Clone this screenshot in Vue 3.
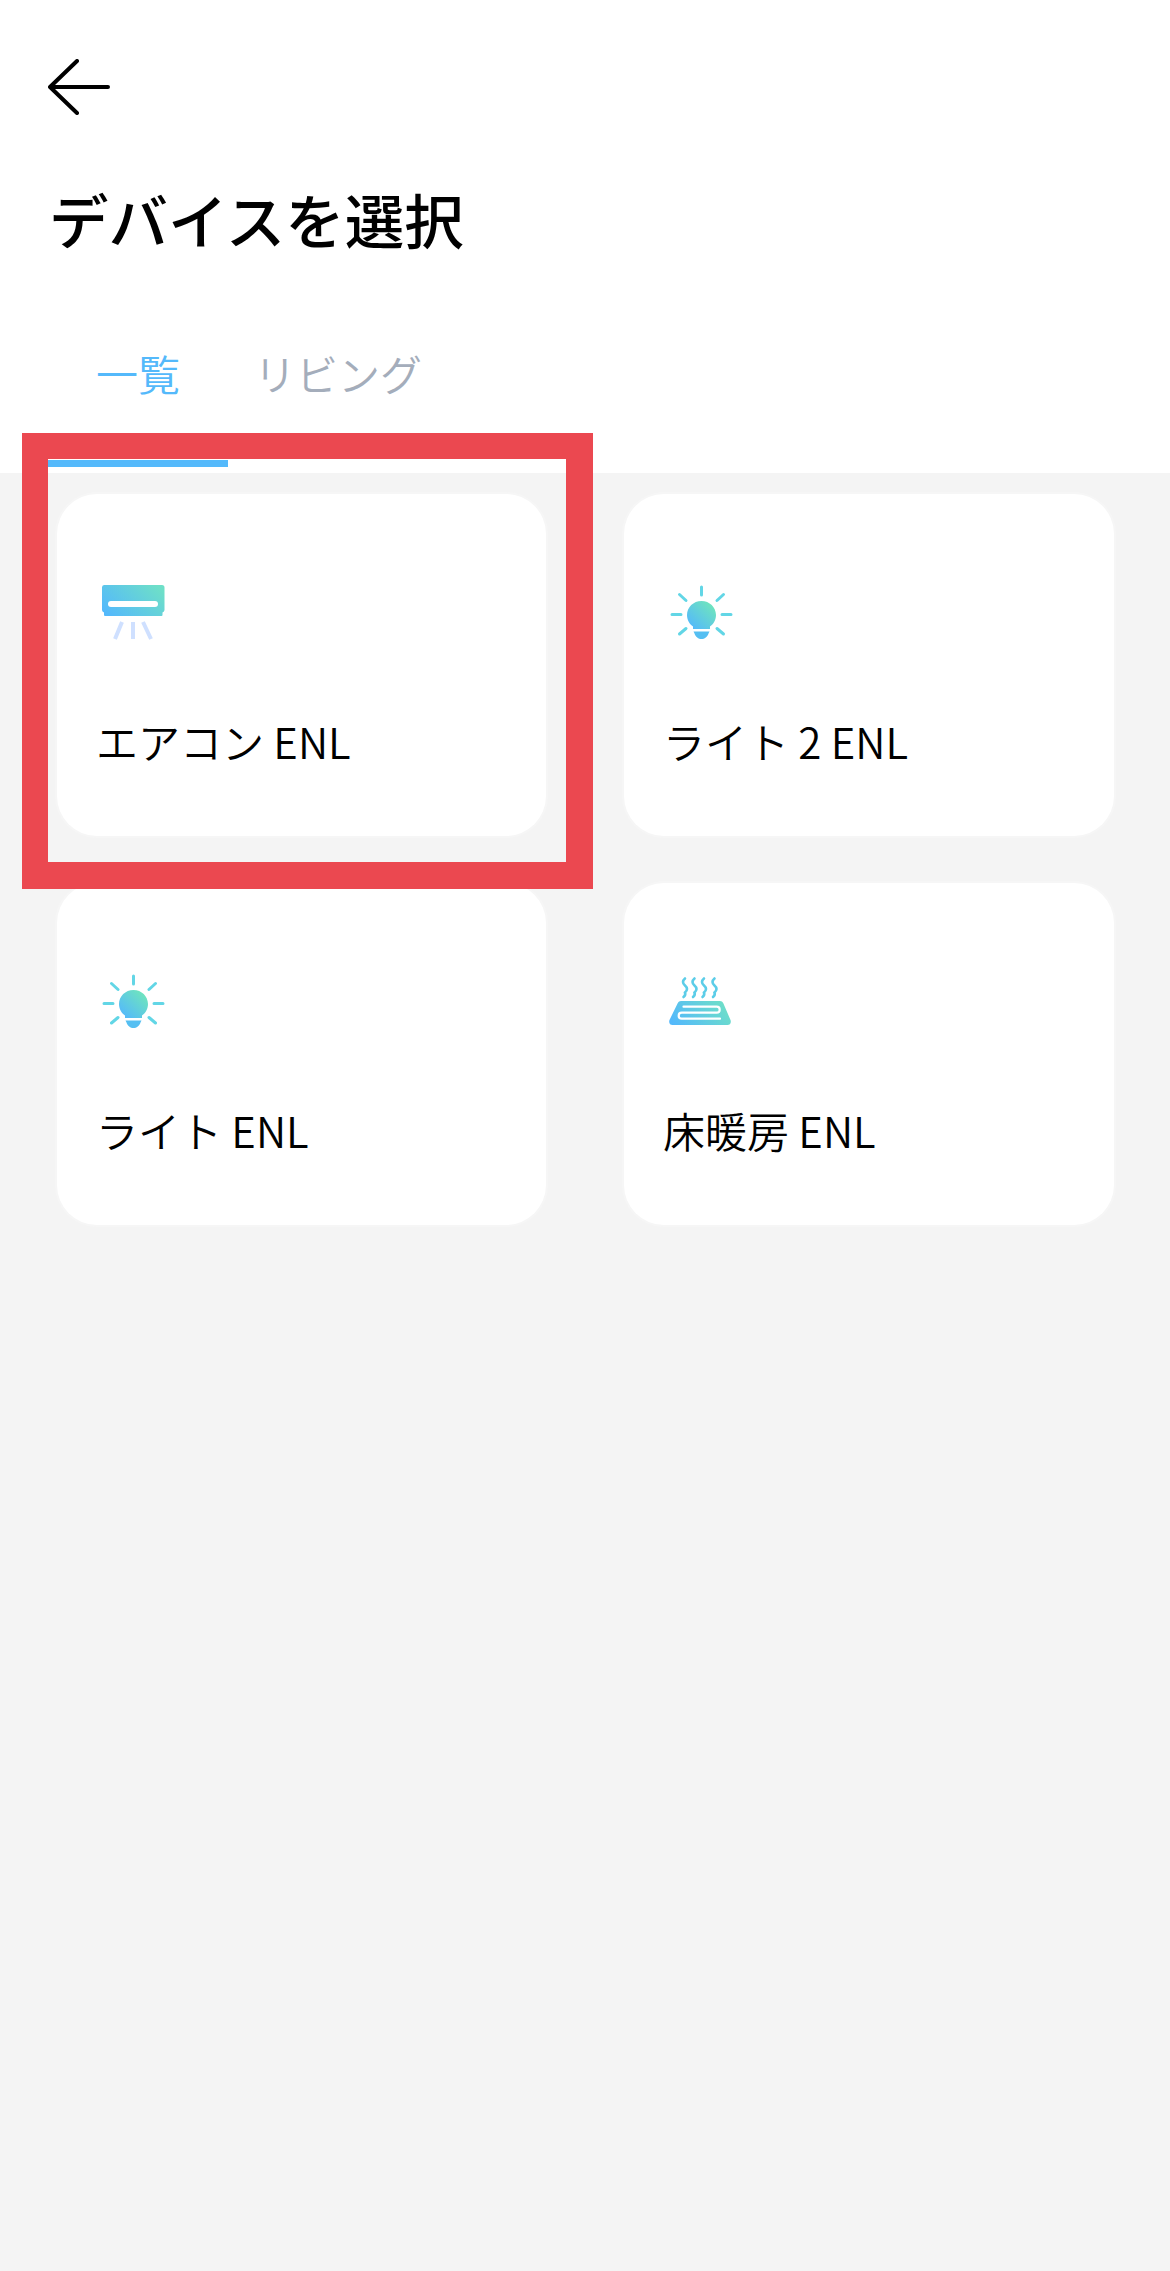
<template>
  <div class="page">
    <header class="top">
      <svg class="back" width="62" height="56" viewBox="0 0 62 56" fill="none" stroke="#000" stroke-width="4" stroke-linecap="round" stroke-linejoin="round">
        <path d="M29 2 2 28l27 26M2 28h58" />
      </svg>
      <h1 class="title">デバイスを選択</h1>
      <div class="tabs">
        <div class="tab active">一覧</div>
        <div class="tab">リビング</div>
      </div>
    </header>

    <div class="grid">
      <div v-for="item in devices" :key="item.name" class="card">
        <div class="icon">
          <svg v-if="item.type === 'ac'" width="66" height="56" viewBox="0 0 66 56">
            <path d="M3 0h58a2.500 2.500 0 0 1 2.500 2.500V25a2.500 2.500 0 0 1-2 2.400V30a1 1 0 0 1-1 1H4a1 1 0 0 1-1-1v-2.600a2.500 2.500 0 0 1-2-2.400V2.500A2.500 2.500 0 0 1 3 0z" fill="url(#grad-ac)" />
            <rect x="7" y="16" width="50" height="6" rx="3" fill="#fff" />
            <path d="M21 37l-7 17M32 37v17M42 37l8 17" stroke="#cfe0ff" stroke-width="4" fill="none" />
          </svg>

          <svg v-else-if="item.type === 'light'" width="64" height="56" viewBox="-1 0 64 56">
            <path d="M31.500 16C23.400 16 17 22.300 17 30c0 5 2.600 9.200 6 11.500V44h17v-2.500c3.400-2.300 6-6.500 6-11.500 0-7.700-6.400-14-14.500-14z" fill="url(#grad-bulb)" />
            <path d="M23.500 46.500h16l-1 2c-1 3.500-4 5.500-7 5.500s-6-2-7-5.500z" fill="#55bff2" />
            <path d="M31.500 2v8M9.500 9.500l6.500 6M53.500 9.500l-6.500 6M2 29.500h9M52 29.500h9M9.500 49l6.500-5.500M53.500 49l-6.500-5.500" stroke="#62d6e6" stroke-width="3" stroke-linecap="round" fill="none" />
          </svg>

          <svg v-else width="62" height="56" viewBox="0 -3 62 56">
            <path d="M12 24h39c1.400 0 2.600.7 3.200 2L61.500 43c1 2.500-.4 5-3 5H3.500c-2.600 0-4-2.500-3-5L8.800 26c.6-1.300 1.800-2 3.200-2z" fill="url(#grad-heat)" />
            <path d="M14.500 29.700H47.700a3 3 0 0 1 0 6H12.700a3 3 0 0 0 0 6H51" stroke="#fff" stroke-width="2.200" fill="none" stroke-linecap="round" />
            <path d="M16 1.500Q12 5 16 8.500T16 15.500Q17 18 14.500 20M25.500 1.500Q21.500 5 25.500 8.500T25.500 15.500Q26.500 18 24 20M35 1.500Q31 5 35 8.500T35 15.500Q36 18 33.500 20M45.500 1.500Q41.500 5 45.500 8.500T45.500 15.500Q46.500 18 44 20" stroke="#5ccde8" stroke-width="2.600" fill="none" stroke-linecap="round" />
          </svg>
        </div>
        <div class="name">{{ item.name }}</div>
      </div>
    </div>

    <div class="highlight"></div>

    <svg width="0" height="0" class="defs">
      <defs>
        <linearGradient id="grad-ac" x1="0" y1="0.750" x2="1" y2="0.250">
          <stop offset="0" stop-color="#54b9fb" />
          <stop offset="1" stop-color="#6edfc8" />
        </linearGradient>
        <linearGradient id="grad-bulb" x1="0" y1="1" x2="1" y2="0">
          <stop offset="0.100" stop-color="#54b9fb" />
          <stop offset="0.850" stop-color="#6ee3bf" />
        </linearGradient>
        <linearGradient id="grad-heat" x1="0" y1="0.700" x2="1" y2="0.400">
          <stop offset="0" stop-color="#54b9fb" />
          <stop offset="1" stop-color="#6edfc8" />
        </linearGradient>
      </defs>
    </svg>
  </div>
</template>

<script setup>
const devices = [
  { name: 'エアコン ENL', type: 'ac' },
  { name: 'ライト 2 ENL', type: 'light' },
  { name: 'ライト ENL', type: 'light' },
  { name: '床暖房 ENL', type: 'heat' }
]
</script>

<style scoped>
.page {
  position: relative;
  width: 1170px;
  height: 2271px;
  background: #f4f4f4;
  font-family: "Noto Sans CJK JP", "Noto Sans", sans-serif;
  overflow: hidden;
}

.top {
  height: 473px;
  padding: 59px 0 0 48px;
  box-sizing: border-box;
  background: #fff;
}

.back {
  display: block;
}

.title {
  margin: 59px 0 0 1px;
  font-size: 59.500px;
  line-height: 88px;
  font-weight: 500;
  color: #000;
}

.tabs {
  display: flex;
  margin-top: 81px;
}

.tab {
  height: 124px;
  padding: 0 0 0 26px;
  box-sizing: border-box;
  font-size: 42px;
  line-height: 60px;
  font-weight: 350;
  color: #a4adbb;
}

.tab.active {
  width: 180px;
  padding: 0;
  text-align: center;
  color: #54b9fb;
  border-bottom: 7px solid #54b9fb;
}

.grid {
  display: grid;
  grid-template-columns: 489px 490px;
  column-gap: 78px;
  row-gap: 47px;
  padding: 21px 0 0 57px;
}

.card {
  height: 342px;
  padding: 91px 0 0 39px;
  box-sizing: border-box;
  background: #fff;
  border-radius: 40px;
  box-shadow: 0 0 0 2px #f6f6f6;
}

.icon {
  height: 56px;
  margin-left: 5px;
}

.card:nth-child(even) .icon {
  margin-left: 6px;
}

.icon svg {
  display: block;
  overflow: visible;
}

.name {
  margin-top: 70px;
  font-size: 42px;
  line-height: 60px;
  font-weight: 350;
  color: #000;
  white-space: pre;
}

.highlight {
  position: absolute;
  left: 22px;
  top: 433px;
  width: 571px;
  height: 456px;
  box-sizing: border-box;
  border-style: solid;
  border-color: #eb4850;
  border-width: 26px 27px 27px 26px;
}

.defs {
  position: absolute;
}
</style>
